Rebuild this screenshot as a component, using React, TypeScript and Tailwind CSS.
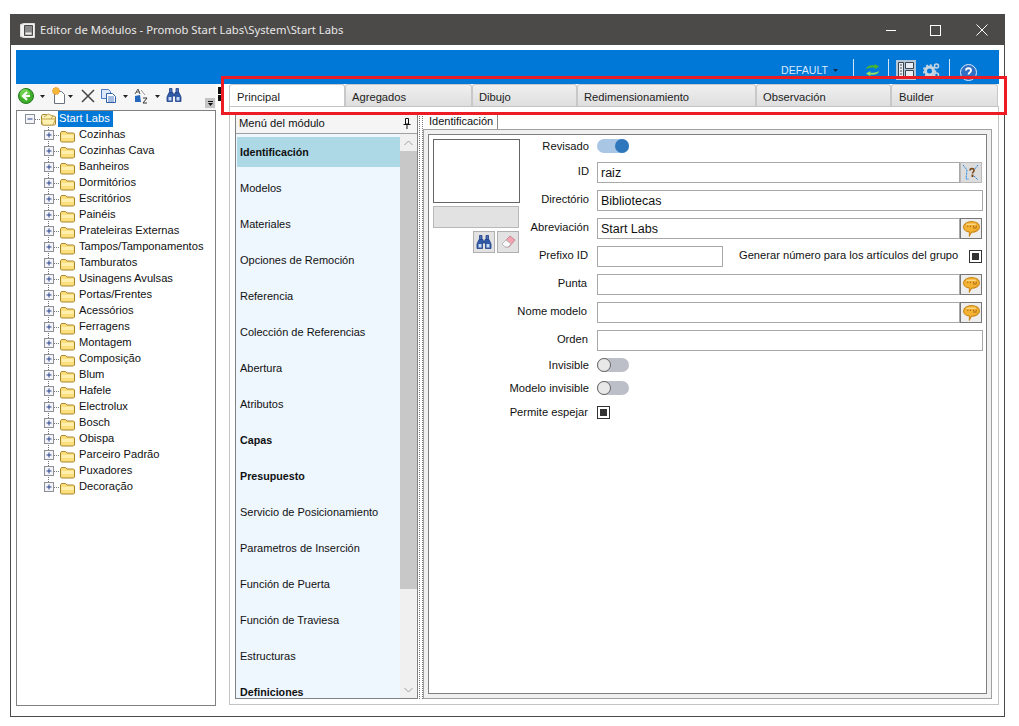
const treeItems = [
  "Cozinhas", "Cozinhas Cava", "Banheiros", "Dormitórios", "Escritórios", "Painéis",
  "Prateleiras Externas", "Tampos/Tamponamentos", "Tamburatos", "Usinagens Avulsas",
  "Portas/Frentes", "Acessórios", "Ferragens", "Montagem", "Composição", "Blum",
  "Hafele", "Electrolux", "Bosch", "Obispa", "Parceiro Padrão", "Puxadores", "Decoração",
];

const tabs = [
  { label: "Principal", width: "w-[116px] pl-[7px]", active: true },
  { label: "Agregados", width: "w-[127px] pl-[6px]" },
  { label: "Dibujo", width: "w-[105px] pl-[6px]" },
  { label: "Redimensionamiento", width: "w-[179px] pl-[6px]" },
  { label: "Observación", width: "w-[135px] pl-[6px]" },
  { label: "Builder", width: "w-[107px] pl-[7px]" },
];

const menuItems = [
  { label: "Identificación", bold: true, active: true },
  { label: "Modelos" },
  { label: "Materiales" },
  { label: "Opciones de Remoción" },
  { label: "Referencia" },
  { label: "Colección de Referencias" },
  { label: "Abertura" },
  { label: "Atributos" },
  { label: "Capas", bold: true },
  { label: "Presupuesto", bold: true },
  { label: "Servicio de Posicionamiento" },
  { label: "Parametros de Inserción" },
  { label: "Función de Puerta" },
  { label: "Función de Traviesa" },
  { label: "Estructuras" },
  { label: "Definiciones", bold: true },
];

function Folder({ open }: { open?: boolean }) {
  return (
    <g>
      <path d="M.5 11V3l1-1.500h4l1.500 1.500h6.500l1 1v7l-1 1h-12z" fill={open ? "#fff3c4" : "#fbdf7c"} stroke="#a8842c" />
      <path d="M1.500 5h12v3h-12z" fill="#fff0b0" />
      {open && <path d="M3 4 7 1l5 2-2 3M.5 6h14L12 12H1.500z" fill="#fdf0b0" stroke="#b39440" strokeWidth=".8" />}
    </g>
  );
}

function TreeBox({ minus }: { minus?: boolean }) {
  return (
    <g>
      <rect x=".5" y=".5" width="9" height="9" fill="#f4f4f6" stroke="#8a8f98" />
      <path d="M2.500 5h5" stroke="#27408b" />
      {!minus && <path d="M5 2.500v5" stroke="#27408b" />}
    </g>
  );
}

function TreeRow({ label, last }: { label: string; last?: boolean }) {
  return (
    <div className="flex h-4 items-center">
      <svg width="32" height="16" viewBox="0 0 32 16" className="shrink-0">
        <path d={last ? "M4.500 0v4" : "M4.500 0v16"} stroke="#777" strokeDasharray="1 1" />
        <path d="M10 8.500h6" stroke="#777" strokeDasharray="1 1" />
        <g transform="translate(0 3)">
          <TreeBox />
        </g>
        <g transform="translate(16 3)">
          <Folder />
        </g>
      </svg>
      <span className="ml-[3px] pb-[2px] text-[11.15px] text-[#111] whitespace-nowrap">{label}</span>
    </div>
  );
}

function Caret({ color = "#222" }: { color?: string }) {
  return (
    <svg width="5" height="3" viewBox="0 0 5 3" className="shrink-0">
      <path d="M0 0h5L2.500 3z" fill={color} />
    </svg>
  );
}

function Binoculars() {
  return (
    <svg width="16" height="14" viewBox="0 0 16 14">
      <path d="M3.500.5h2.500v4H3.500zM10 .5h2.500v4H10z" fill="#4a70b8" stroke="#1f3f86" strokeWidth=".8" />
      <path d="M3 4.500h4v1.500h2V4.500h4l2 4.500v4.500H9.500V8h-3v5.500H1V9z" fill="#2f5aa8" stroke="#1f3f86" strokeWidth=".8" />
      <path d="M2.500 9h3v3.500h-3zM10.500 9h3v3.500h-3z" fill="#c6d8f4" />
    </svg>
  );
}

function Toolbar() {
  return (
    <div className="relative flex h-[26px] bg-[#f6f6f6] pl-[2px] pt-[4px]">
      <svg width="16" height="16" viewBox="0 0 16 16" className="shrink-0">
        <circle cx="8" cy="8" r="7.500" fill="#3fae2a" stroke="#1f7a1a" />
        <circle cx="7" cy="6" r="5" fill="#6fd14f" />
        <path d="M9 4 5 8l4 4M5 8h7" fill="none" stroke="#fff" strokeWidth="2" />
      </svg>
      <div className="ml-[6px] mt-[7px]"><Caret /></div>
      <svg width="16" height="17" viewBox="0 0 16 17" className="ml-[6px] -mt-[1px] shrink-0">
        <path d="M3.500 4.500h7l3 3v9h-10z" fill="#fff" stroke="#6b7280" />
        <circle cx="5" cy="4" r="3.500" fill="#f5b73a" stroke="#e8912a" strokeDasharray="1.500 1" />
      </svg>
      <div className="ml-[1px] mt-[7px]"><Caret /></div>
      <svg width="14" height="14" viewBox="0 0 14 14" className="ml-[8px] mt-[1px] shrink-0">
        <path d="M1 1l12 12M13 1 1 13" stroke="#444" strokeWidth="1.500" />
      </svg>
      <svg width="15" height="14" viewBox="0 0 15 14" className="ml-[6px] mt-[1px] shrink-0">
        <path d="M.5.5h7l2 2v7h-9z" fill="#dbe8fa" stroke="#4a78c4" />
        <path d="M5.500 4.500h6l3 3v6h-9z" fill="#fff" stroke="#2f5ea8" />
        <path d="M7 8h6M7 10h6M7 12h6" stroke="#4a78c4" />
      </svg>
      <div className="ml-[7px] mt-[7px]"><Caret /></div>
      <svg width="16" height="16" viewBox="0 0 16 16" className="ml-[5px] shrink-0">
        <path d="M2 14V8l5-1 1 7z" fill="#2468bd" />
        <path d="M5 1 2 6M5 1l2 5M3 4h4" stroke="#555" fill="none" />
        <path d="M10 10h4l-4 5h4" stroke="#333" fill="none" />
        <path d="M8 2l4 5" stroke="#999" />
      </svg>
      <div className="ml-[6px] mt-[7px]"><Caret /></div>
      <div className="ml-[6px]"><Binoculars /></div>
      <div className="absolute right-[1px] bottom-[2px] flex h-[10px] w-[10px] flex-col items-center justify-center gap-[1px] bg-[#c4c4c4]">
        <div className="h-px w-[5px] bg-[#111]" />
        <Caret color="#111" />
      </div>
    </div>
  );
}

function BlueBar() {
  return (
    <div className="flex h-[34px] items-start justify-end bg-[#0078d7] pr-[22px] pt-[9px]">
      <span className="mt-[4px] text-[10.6px] leading-[14px] text-[#dbeafe]">DEFAULT</span>
      <div className="ml-[5px] mt-[10px]"><Caret color="#0f2a4a" /></div>
      <div className="ml-[15px] h-[17px] w-px bg-[#cfe3f7]" />
      <svg width="17" height="14" viewBox="0 0 17 16" className="ml-[10px] mt-[4px] shrink-0">
        <path d="M1 7c1-4 6-5 10-4V1l5 3-5 3V5C7 5 4 5 1 7z" fill="#49b52c" />
        <path d="M16 9c-1 4-6 5-10 4v2L1 12l5-3v2c4 0 7 0 10-2z" fill="#8ee05e" />
      </svg>
      <div className="ml-[7px] h-[17px] w-px bg-[#cfe3f7]" />
      <div className="ml-[7px] mt-[1px] flex h-[20px] w-[20px] items-start justify-center bg-[#b4c8da] pt-[2px]">
        <svg width="16" height="15" viewBox="0 0 16 15">
          <path d="M.5.5h5v14h-5zM7.500.5h8v6h-8zM7.500 8.500h8v6h-8z" fill="#e8eef4" stroke="#3d4650" />
          <path d="M2 3h2M2 6h2M2 9h2M2 12h2" stroke="#3d4650" />
        </svg>
      </div>
      <svg width="17" height="17" viewBox="0 0 17 17" className="ml-[7px] mt-[3px] shrink-0">
        <circle cx="6.500" cy="9" r="4" fill="none" stroke="#c8d6e2" strokeWidth="3" />
        <circle cx="6.500" cy="9" r="6" fill="none" stroke="#c8d6e2" strokeWidth="1.500" strokeDasharray="2 2" />
        <circle cx="13.500" cy="4" r="2" fill="none" stroke="#c8d6e2" strokeWidth="1.500" />
        <circle cx="13.500" cy="13" r="2" fill="none" stroke="#c8d6e2" strokeWidth="1.500" />
      </svg>
      <div className="ml-[9px] h-[17px] w-px bg-[#cfe3f7]" />
      <svg width="17" height="17" viewBox="0 0 17 17" className="ml-[10px] mt-[5px] shrink-0">
        <circle cx="8.500" cy="8.500" r="8" fill="#2f6fc4" stroke="#e3ecf6" />
        <path d="M6 6.500c0-3 5-3 5 0 0 2-2.500 2-2.500 4" fill="none" stroke="#fff" strokeWidth="1.800" />
        <path d="M7.500 12h2v2h-2z" fill="#fff" />
      </svg>
    </div>
  );
}

function Toggle({ on }: { on?: boolean }) {
  if (on) {
    return (
      <div className="flex h-[14px] w-[32px] justify-end rounded-full bg-[#a9c7e5]">
        <div className="h-[14px] w-[14px] rounded-full bg-[#2f77bc]" />
      </div>
    );
  }
  return (
    <div className="flex h-[14px] w-[32px] rounded-full bg-[#bcbec8]">
      <div className="h-[14px] w-[14px] rounded-full border border-[#666] bg-[#e8e8e8]" />
    </div>
  );
}

function Check() {
  return (
    <div className="flex h-[13px] w-[13px] items-center justify-center border border-[#333] bg-white">
      <div className="h-[7px] w-[7px] bg-[#333]" />
    </div>
  );
}

function Field({ value, className = "flex-1" }: { value?: string; className?: string }) {
  return (
    <div className={`flex h-[21px] items-center border border-[#a8a8a8] bg-white pl-[3px] pt-px text-[12.5px] text-[#111] ${className}`}>
      {value}
    </div>
  );
}

function BubbleButton() {
  return (
    <div className="mr-px flex h-[21px] w-[22px] shrink-0 items-center justify-center border border-[#777] bg-[#eee]">
      <svg width="17" height="16" viewBox="0 0 16 15">
        <path d="M8 .5c4 0 7.500 2 7.500 5S12 10.500 8 10.500l-2 3.500v-3.700C3 10 .5 8 .5 5.500S4 .5 8 .5z" fill="#f4b232" stroke="#c8861a" />
        <path d="M3 3h9" stroke="#fbe2a0" />
        <path d="M4 5h1M6.500 5h1M9.500 5h1M12 5h1M9.500 6.500h3.500" stroke="#a8641a" />
      </svg>
    </div>
  );
}

function MapButton() {
  return (
    <div className="mr-px flex h-[21px] w-[22px] shrink-0 items-center justify-center border border-[#b8b8b8] bg-[#dcdcdc]">
      <svg width="18" height="17" viewBox="0 0 18 17">
        <path d="M1 1l4 5-1 9h3M16 1l-4 5M12 12l4 4" fill="none" stroke="#1e88e5" strokeDasharray="2 1" />
        <path d="M8 6.500c0-2.500 4-2.500 4 0 0 1.500-1.500 1.500-1.500 3" fill="none" stroke="#7a4a1c" strokeWidth="1.600" />
        <path d="M9.500 10.500h2V13h-2z" fill="#7a4a1c" />
      </svg>
    </div>
  );
}

function SmallButton({ children }: { children: React.ReactNode }) {
  return (
    <div className="flex h-[22px] w-[22px] items-center justify-center border border-[#b0b0b0] bg-[#e2e2e2]">
      {children}
    </div>
  );
}

function Row({ label, width, labelClass = "", className = "", children }: {
  label: string;
  width: string;
  labelClass?: string;
  className?: string;
  children: React.ReactNode;
}) {
  return (
    <div className={`flex items-center ${className}`}>
      <span className={`shrink-0 whitespace-nowrap text-right text-[11.2px] leading-[14px] text-[#111] ${width} ${labelClass}`}>
        {label}
      </span>
      <div className="ml-[8px] flex min-w-0 flex-1 items-center">{children}</div>
    </div>
  );
}

function IdentForm() {
  return (
    <div className="h-full border border-[#808080] bg-white pl-[4px] pr-[3px] pt-[4px]">
      <div className="flex">
        <div className="w-[87px] shrink-0">
          <div className="h-[64px] w-[87px] border border-[#666] bg-white" />
          <div className="mt-[3px] h-[22px] w-[86px] border border-[#b8b8b8] bg-[#e2e2e2]" />
          <div className="mt-[3px] flex w-[86px] justify-end gap-[2px]">
            <SmallButton>
              <Binoculars />
            </SmallButton>
            <SmallButton>
              <svg width="16" height="15" viewBox="0 0 16 15">
                <path d="M10 1l5 4-6 7H5L2 9z" fill="#f3a3b0" stroke="#c8899a" />
                <path d="M6 5l5 4-3 3H5L2 9z" fill="#fafafa" stroke="#bbb" />
              </svg>
            </SmallButton>
          </div>
        </div>
        <div className="flex-1">
          <Row label="Revisado" width="w-[69px]">
            <Toggle on />
          </Row>
          <Row label="ID" width="w-[69px]" labelClass="pb-[3px]" className="mt-[9px]">
            <Field value="raiz" />
            <MapButton />
          </Row>
          <Row label="Directório" width="w-[69px]" labelClass="pb-[3px]" className="mt-[7px]">
            <Field value="Bibliotecas" />
          </Row>
          <Row label="Abreviación" width="w-[69px]" labelClass="pb-[3px]" className="mt-[7px]">
            <Field value="Start Labs" />
            <BubbleButton />
          </Row>
          <Row label="Prefixo ID" width="w-[69px]" labelClass="pb-[3px] pr-px" className="mt-[7px]">
            <Field className="w-[126px] shrink-0" />
            <span className="ml-[16px] whitespace-nowrap pb-[3px] text-[11.15px] leading-[14px] text-[#111]">
              Generar número para los artículos del grupo
            </span>
            <div className="ml-auto mr-px"><Check /></div>
          </Row>
          <Row label="Punta" width="w-[69px]" labelClass="pb-[3px] pr-[2px]" className="mt-[7px]">
            <Field />
            <BubbleButton />
          </Row>
        </div>
      </div>
      <Row label="Nome modelo" width="w-[156px]" labelClass="pb-[3px] pr-[2px]" className="mt-[7px]">
        <Field />
        <BubbleButton />
      </Row>
      <Row label="Orden" width="w-[156px]" labelClass="pb-[3px] pr-px" className="mt-[7px]">
        <Field />
      </Row>
      <Row label="Invisible" width="w-[156px]" className="mt-[7px]">
        <Toggle />
      </Row>
      <Row label="Modelo invisible" width="w-[156px]" className="mt-[9px]">
        <Toggle />
      </Row>
      <Row label="Permite espejar" width="w-[156px]" labelClass="pr-px" className="mt-[10px]">
        <Check />
      </Row>
    </div>
  );
}

function ModuleMenu() {
  return (
    <div className="flex h-[586px] w-[183px] shrink-0 flex-col border-x border-b border-[#808080]">
      <div className="flex h-[21px] shrink-0 items-center justify-between border-b border-[#a0a0a0] bg-[#f5f5f5] pl-[3px] pr-[6px]">
        <span className="text-[11.2px] text-[#111]">Menú del módulo</span>
        <svg width="8" height="11" viewBox="0 0 8 11">
          <path d="M2.500.5h3V6h-3zM.5 6.500h7M4 7v4" fill="none" stroke="#111" />
        </svg>
      </div>
      <div className="flex min-h-0 flex-1">
        <div className="flex-1 overflow-hidden bg-[#eef6fe] pl-px pt-[3px]">
          {menuItems.map((item) => (
            <div
              key={item.label}
              className={`mb-[6px] flex h-[30px] items-center pl-[3px] text-[#111] whitespace-nowrap ${
                item.active ? "bg-[#add8e6]" : ""
              } ${item.bold ? "text-[10.7px] font-bold" : "text-[11px]"}`}
            >
              {item.label}
            </div>
          ))}
        </div>
        <div className="flex w-[17px] shrink-0 flex-col bg-[#f0f0f0]">
          <div className="flex h-[17px] shrink-0 items-center justify-center">
            <svg width="9" height="6" viewBox="0 0 9 6">
              <path d="M.5 5 4.500 1l4 4" fill="none" stroke="#a0a0a0" />
            </svg>
          </div>
          <div className="h-[438px] bg-[#c8c8c8]" />
          <div className="mt-auto flex h-[17px] shrink-0 items-center justify-center">
            <svg width="9" height="6" viewBox="0 0 9 6">
              <path d="M.5 1l4 4 4-4" fill="none" stroke="#a0a0a0" />
            </svg>
          </div>
        </div>
      </div>
    </div>
  );
}

export default function App() {
  return (
    <div className="relative h-[726px] w-[1019px] overflow-hidden bg-white font-['Liberation_Sans',sans-serif]">
      <div className="ml-[10px] mt-[14px] flex h-[703px] w-[995px] flex-col border border-[#4c4a48] bg-white">
        <div className="flex h-[30px] shrink-0 items-center bg-[#4c4a48] pl-[9px] text-white">
          <svg width="15" height="15" viewBox="0 0 15 15" className="shrink-0">
            <path d="M.5 1.500 4 .5h10.500v14H4l-3.500-1z" fill="#f2f2f2" stroke="#ddd" />
            <path d="M4.500 2.500h8v10h-8z" fill="#8a8a8a" stroke="#4c4a48" />
            <path d="M5.500 9.500h6v2h-6z" fill="#eee" />
          </svg>
          <span className="ml-[5px] font-['Noto_Sans',sans-serif] text-[11.25px] text-[#e8e8e8] whitespace-nowrap">
            Editor de Módulos - Promob Start Labs\System\Start Labs
          </span>
          <div className="ml-auto flex items-center">
            <div className="h-px w-[10px] bg-white" />
            <div className="ml-[34px] h-[11px] w-[11px] border border-white" />
            <svg width="12" height="12" viewBox="0 0 12 12" className="ml-[35px] mr-[16px]">
              <path d="M.5.5l11 11M11.500.5l-11 11" stroke="#fff" />
            </svg>
          </div>
        </div>
        <div className="flex-1 px-[5px] pt-[5px]">
          <BlueBar />
          <div className="flex">
            <div className="w-[200px] shrink-0">
              <Toolbar />
              <div className="h-[596px] border border-[#808080] bg-white pl-[8px]">
                <div className="flex h-4 items-center">
                  <svg width="31" height="16" viewBox="0 0 31 16" className="shrink-0">
                    <g transform="translate(0 3)">
                      <TreeBox minus />
                    </g>
                    <path d="M10 8.500h6" stroke="#777" strokeDasharray="1 1" />
                    <g transform="translate(16 2)">
                      <Folder open />
                    </g>
                  </svg>
                  <span className="ml-[2px] h-4 w-[55px] bg-[#0078d7] pl-px text-[11.15px] leading-[14px] text-white whitespace-nowrap">
                    Start Labs
                  </span>
                </div>
                <div className="pl-[19px]">
                  {treeItems.map((item, i) => (
                    <TreeRow key={item} label={item} last={i === treeItems.length - 1} />
                  ))}
                </div>
              </div>
            </div>
            <div className="flex w-[13px] shrink-0 flex-col gap-[1px] pl-[2px] pt-[3px]">
              <div className="h-[7px] w-[4px] bg-[#111]" />
              <div className="h-[6px] w-[4px] bg-[#111]" />
            </div>
            <div className="w-[770px] shrink-0">
              <div className="flex h-[22px]">
                {tabs.map((tab) => (
                  <div
                    key={tab.label}
                    className={`flex items-center rounded-t-[3px] border-x border-t border-[#c8c8c8] pt-[3px] text-[11.2px] text-[#222] ${tab.width} ${
                      tab.active ? "bg-white" : "bg-gradient-to-b from-[#f0f0f0] to-[#dedede]"
                    }`}
                  >
                    {tab.label}
                  </div>
                ))}
              </div>
              <div className="flex h-[599px] border border-[#c4c4c4] bg-white pl-[5px] pt-[6px]">
                <ModuleMenu />
                <div className="ml-px h-[586px] w-[4px] shrink-0 border-x border-dotted border-[#777]" />
                <div className="h-[586px] w-[569px] shrink-0">
                  <div className="flex h-[16px]">
                    <div className="ml-px flex w-[74px] items-center border-r border-[#888] pl-[5px] text-[11px] text-[#111]">
                      Identificación
                    </div>
                  </div>
                  <div className="h-[570px] border border-[#a0a0a0] bg-[#f0f0f0] p-[4px]">
                    <IdentForm />
                  </div>
                </div>
              </div>
            </div>
          </div>
        </div>
      </div>
      <div className="pointer-events-none absolute left-[221px] top-[76px] h-[39px] w-[786px] border-[3px] border-[#ed1c24]" />
    </div>
  );
}
